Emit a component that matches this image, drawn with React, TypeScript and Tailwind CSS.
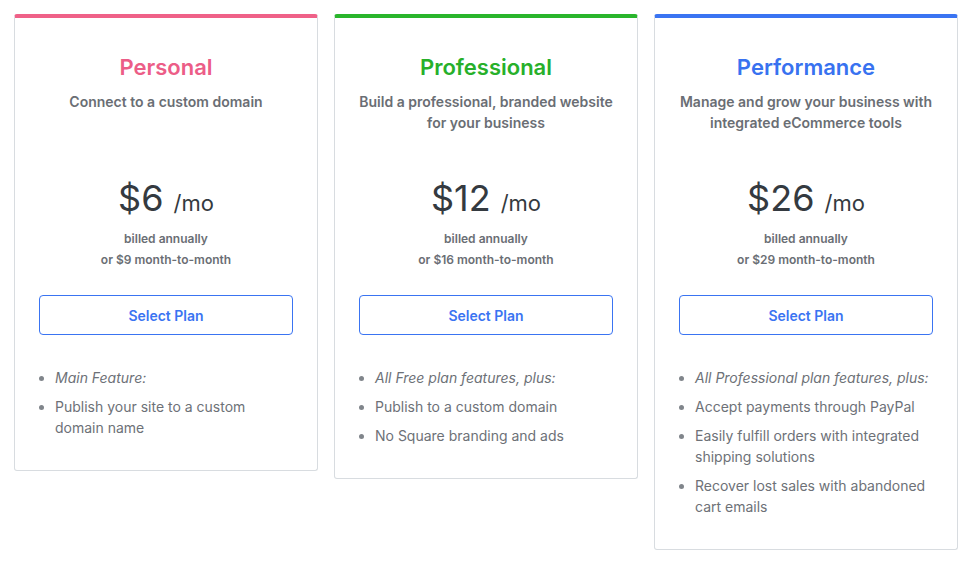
import React from 'react';

type Plan = {
  name: string;
  titleColor: string;
  topBorder: string;
  desc: string[];
  price: string;
  monthly: string;
  features: { text: string; italic?: boolean }[];
};

const plans: Plan[] = [
  {
    name: 'Personal',
    titleColor: 'text-[#ec5d87]',
    topBorder: 'border-t-[#ef6188]',
    desc: ['Connect to a custom domain'],
    price: '$6',
    monthly: 'or $9 month-to-month',
    features: [
      { text: 'Main Feature:', italic: true },
      { text: 'Publish your site to a custom domain name' },
    ],
  },
  {
    name: 'Professional',
    titleColor: 'text-[#27b02a]',
    topBorder: 'border-t-[#2ab52c]',
    desc: ['Build a professional, branded website', 'for your business'],
    price: '$12',
    monthly: 'or $16 month-to-month',
    features: [
      { text: 'All Free plan features, plus:', italic: true },
      { text: 'Publish to a custom domain' },
      { text: 'No Square branding and ads' },
    ],
  },
  {
    name: 'Performance',
    titleColor: 'text-[#3872f0]',
    topBorder: 'border-t-[#3a74f2]',
    desc: ['Manage and grow your business with', 'integrated eCommerce tools'],
    price: '$26',
    monthly: 'or $29 month-to-month',
    features: [
      { text: 'All Professional plan features, plus:', italic: true },
      { text: 'Accept payments through PayPal' },
      { text: 'Easily fulfill orders with integrated shipping solutions' },
      { text: 'Recover lost sales with abandoned cart emails' },
    ],
  },
];

const PlanCard: React.FC<{ plan: Plan }> = ({ plan }) => (
  <div
    className={`w-[304px] bg-white border border-[#d8dce0] border-t-4 ${plan.topBorder} rounded-[3px] px-6 pt-[35px] pb-8`}
  >
    <h2 className={`text-center text-[22px] leading-[28px] font-semibold ${plan.titleColor}`}>{plan.name}</h2>
    <p className="mt-[10px] min-h-[42px] text-center text-[14px] leading-[21px] font-semibold text-[#6a6e74]">
      {plan.desc.map((line, i) => (
        <React.Fragment key={i}>
          {line}
          {i < plan.desc.length - 1 && <br />}
        </React.Fragment>
      ))}
    </p>
    <div className="mt-[43px] flex items-baseline justify-center text-[#343a40]">
      <span className="text-[36px] leading-[44px]">{plan.price}</span>
      <span className="ml-[10px] text-[22px] leading-[44px]">/mo</span>
    </div>
    <div className="mt-[3px] text-center text-[12px] leading-[21px] font-semibold text-[#6a6e74]">
      <div>billed annually</div>
      <div>{plan.monthly}</div>
    </div>
    <button className="mt-[25px] w-full h-[40px] rounded-[4px] border border-[#3a74f2] bg-white text-[14px] font-semibold text-[#3a74f2]">
      Select Plan
    </button>
    <ul className="mt-[32px] list-disc pl-4 marker:text-[#80858b] text-[14px] leading-[21px] text-[#6d7177] space-y-2">
      {plan.features.map((f, i) => (
        <li key={i} className={f.italic ? 'italic' : ''}>
          {f.text}
        </li>
      ))}
    </ul>
  </div>
);

export default function App() {
  return (
    <div className="min-h-screen bg-white pt-[14px] pl-[14px]" style={{ fontFamily: 'Inter, "Open Sans", Arial, sans-serif' }}>
      <div className="flex items-start gap-4">
        {plans.map((p) => (
          <PlanCard key={p.name} plan={p} />
        ))}
      </div>
    </div>
  );
}
